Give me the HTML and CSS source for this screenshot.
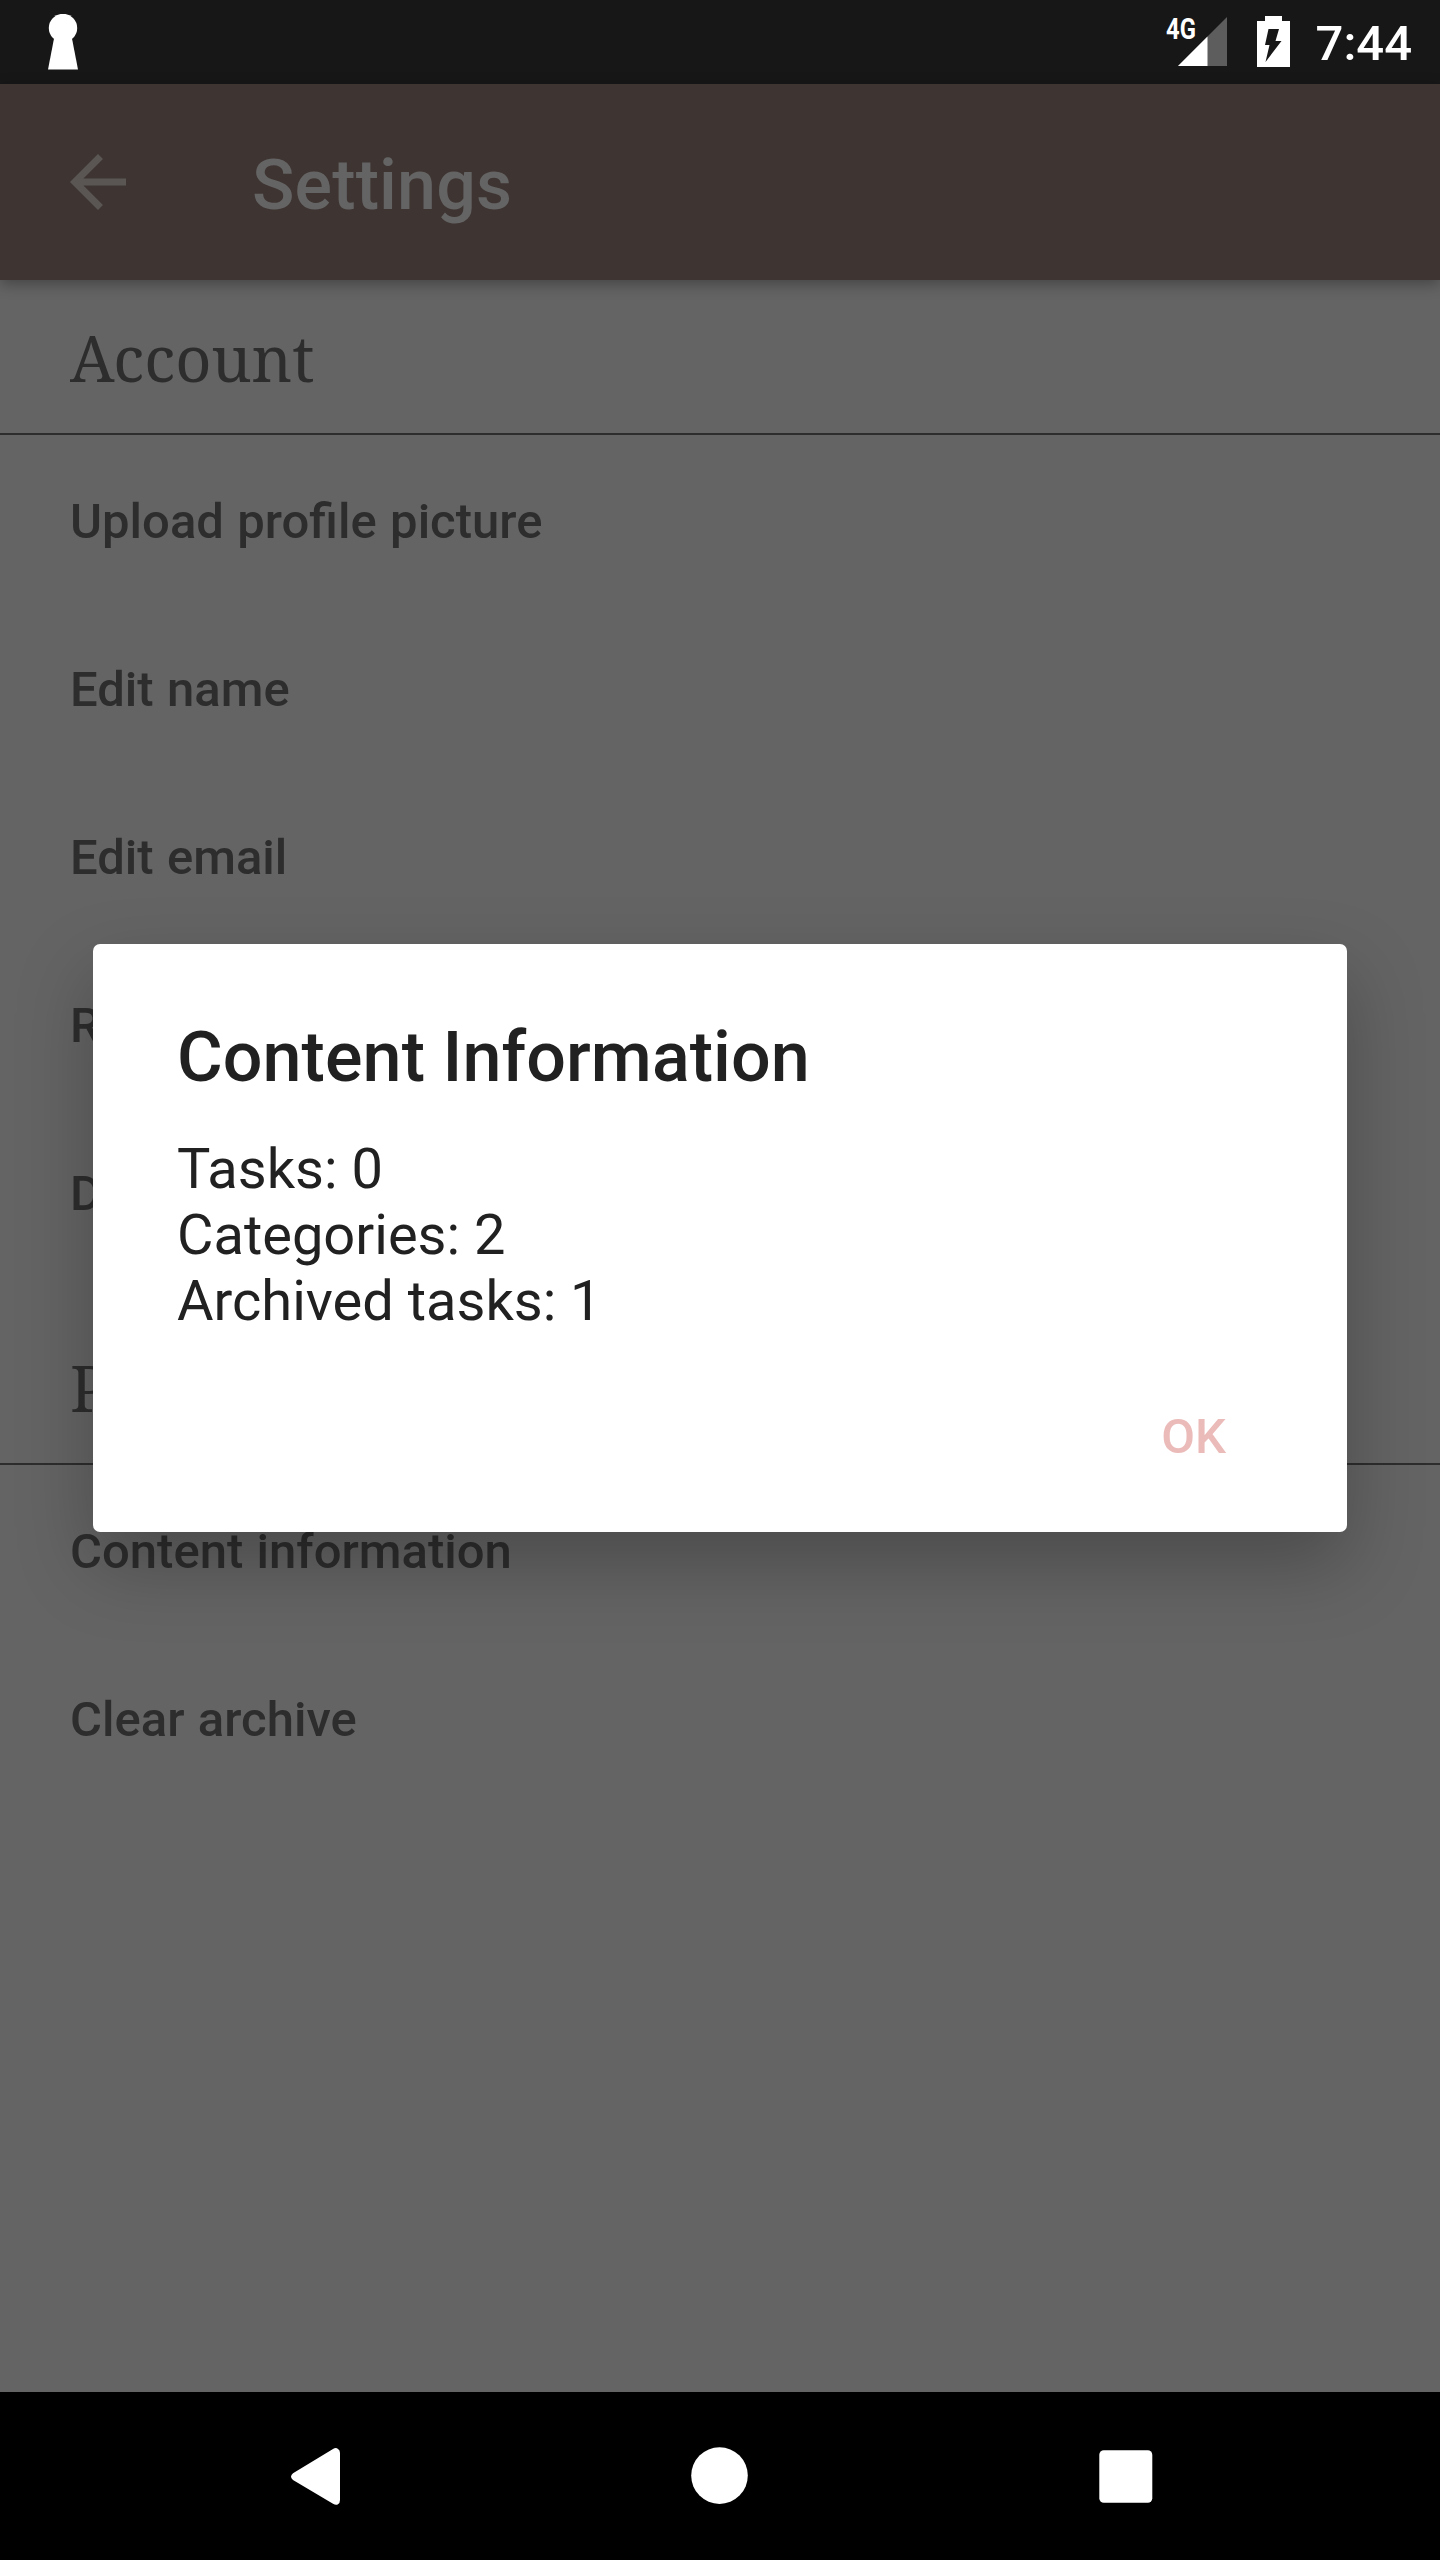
FILE: index.html
```html
<!DOCTYPE html>
<html lang="en">
<head>
<meta charset="utf-8">
<title>Settings</title>
<link rel="stylesheet" href="styles.css">
</head>
<body>
<div class="screen">
  <header class="status-bar">
    <svg class="keyhole" width="30" height="56" viewBox="0 0 30 56"><circle cx="15" cy="14" r="14.2" fill="#fff"/><path d="M6.5 22h17L30 55.6H0z" fill="#fff"/></svg>
    <div class="status-icons">
      <span class="network">4G</span>
      <svg class="signal" width="49" height="49" viewBox="0 0 49 49"><path d="M49 0v49H0z" fill="#5d5d5d"/><path d="M29.500 19.500V49H0z" fill="#fff"/></svg>
      <svg class="battery" width="33" height="51" viewBox="0 0 33 51"><path d="M8 0h17v5h8v46H0V5h8z" fill="#fff"/><path d="M11.500 13H22L18.500 25H24.500L8.500 46L12.500 29H8z" fill="#171717"/></svg>
      <span class="clock">7:44</span>
    </div>
  </header>
  <div class="app-bar">
    <svg class="back" width="84" height="84" viewBox="0 0 24 24"><path d="M20 11H7.830l5.590-5.590L12 4l-8 8 8 8 1.410-1.410L7.830 13H20z" fill="#595654"/></svg>
    <h1 class="app-title">Settings</h1>
  </div>
  <main class="content">
    <h2 class="section"><span>Account</span></h2>
    <ul class="list">
      <li>Upload profile picture</li>
      <li>Edit name</li>
      <li>Edit email</li>
      <li>R</li>
      <li>D</li>
    </ul>
    <h2 class="section section-next"><span>P</span></h2>
    <ul class="list">
      <li>Content information</li>
      <li>Clear archive</li>
    </ul>
  </main>
  <nav class="nav-bar">
    <svg width="60" height="60" viewBox="0 0 60 60"><path d="M7 27.300L47 3Q50 1 52 3Q54 4 54 7V54Q54 57 52 58.200Q50 59.500 47 57.800L7 34Q3 30.700 7 27.300z" fill="#fff"/></svg>
    <svg width="60" height="60" viewBox="0 0 60 60"><circle cx="28.500" cy="29.600" r="28.300" fill="#fff"/></svg>
    <svg width="60" height="60" viewBox="0 0 60 60"><rect x="3.300" y="4.300" width="53" height="52.500" rx="4.500" fill="#fff"/></svg>
  </nav>
  <section class="dialog">
    <h2 class="dialog-title">Content Information</h2>
    <p class="dialog-body">Tasks: 0<br>Categories: 2<br>Archived tasks: 1</p>
    <button class="dialog-ok">OK</button>
  </section>
</div>
</body>
</html>
```
FILE: styles.css
```css
* { box-sizing: border-box; margin: 0; padding: 0; }
body { font-family: Roboto, "Liberation Sans", sans-serif; }
svg { display: block; flex: none; }
.screen {
  position: relative;
  display: flex;
  flex-direction: column;
  width: 1440px;
  height: 2560px;
  overflow: hidden;
  background: #646464;
}
.status-bar {
  display: flex;
  justify-content: space-between;
  align-items: center;
  height: 84px;
  padding: 0 28px 0 48px;
  background: #171717;
}
.status-icons { display: flex; align-items: flex-start; height: 84px; color: #fff; }
.network {
  width: 12px;
  margin-top: 12px;
  font-size: 29px;
  line-height: 34px;
  font-weight: 700;
  transform: scaleX(0.82);
  transform-origin: left;
}
.signal { margin-top: 17px; }
.battery { margin: 16px 26px 0 30px; }
.clock { margin-top: 15px; font-size: 49px; line-height: 58px; font-weight: 500; }
.app-bar {
  z-index: 1;
  display: flex;
  align-items: center;
  height: 196px;
  padding-left: 56px;
  background: #3e3432;
  box-shadow: 0 4px 14px rgba(0, 0, 0, 0.32);
}
.app-title {
  margin: 6px 0 0 112px;
  font-size: 70px;
  line-height: 82px;
  font-weight: 500;
  letter-spacing: 0.15px;
  color: #646464;
}
.content { flex: 1; color: #2d2d2d; }
.section {
  height: 155px;
  padding: 35px 70px 0;
  border-bottom: 2px solid #2d2d2d;
  font-family: "Noto Serif", "DejaVu Serif Condensed", "DejaVu Serif", serif;
  font-size: 63px;
  line-height: 86px;
  font-weight: 400;
}
.section-next { height: 187px; padding-top: 67px; }
.list { padding-top: 3px; list-style: none; }
.list li {
  height: 168px;
  padding-left: 70px;
  font-size: 49px;
  line-height: 168px;
  font-weight: 500;
  word-spacing: 1.2px;
}
.nav-bar {
  display: flex;
  justify-content: space-between;
  align-items: center;
  height: 168px;
  padding: 0 284px 0 286px;
  background: #000;
}
.dialog {
  position: absolute;
  z-index: 2;
  top: 944px;
  left: 93px;
  display: flex;
  flex-direction: column;
  width: 1254px;
  height: 588px;
  padding: 72px 84px 0;
  border-radius: 7px;
  background: #fff;
  box-shadow: 0 32px 76px rgba(0, 0, 0, 0.25);
  color: #212121;
}
.dialog-title { font-size: 70px; line-height: 82px; font-weight: 500; letter-spacing: 0.08px; }
.dialog-body { margin-top: 38px; font-size: 56px; line-height: 66px; }
.dialog-ok {
  align-self: flex-end;
  margin: 74px 37px 0 0;
  border: 0;
  background: none;
  font: 500 49px/58px Roboto, "Liberation Sans", sans-serif;
  color: #ebbbb9;
}
```
